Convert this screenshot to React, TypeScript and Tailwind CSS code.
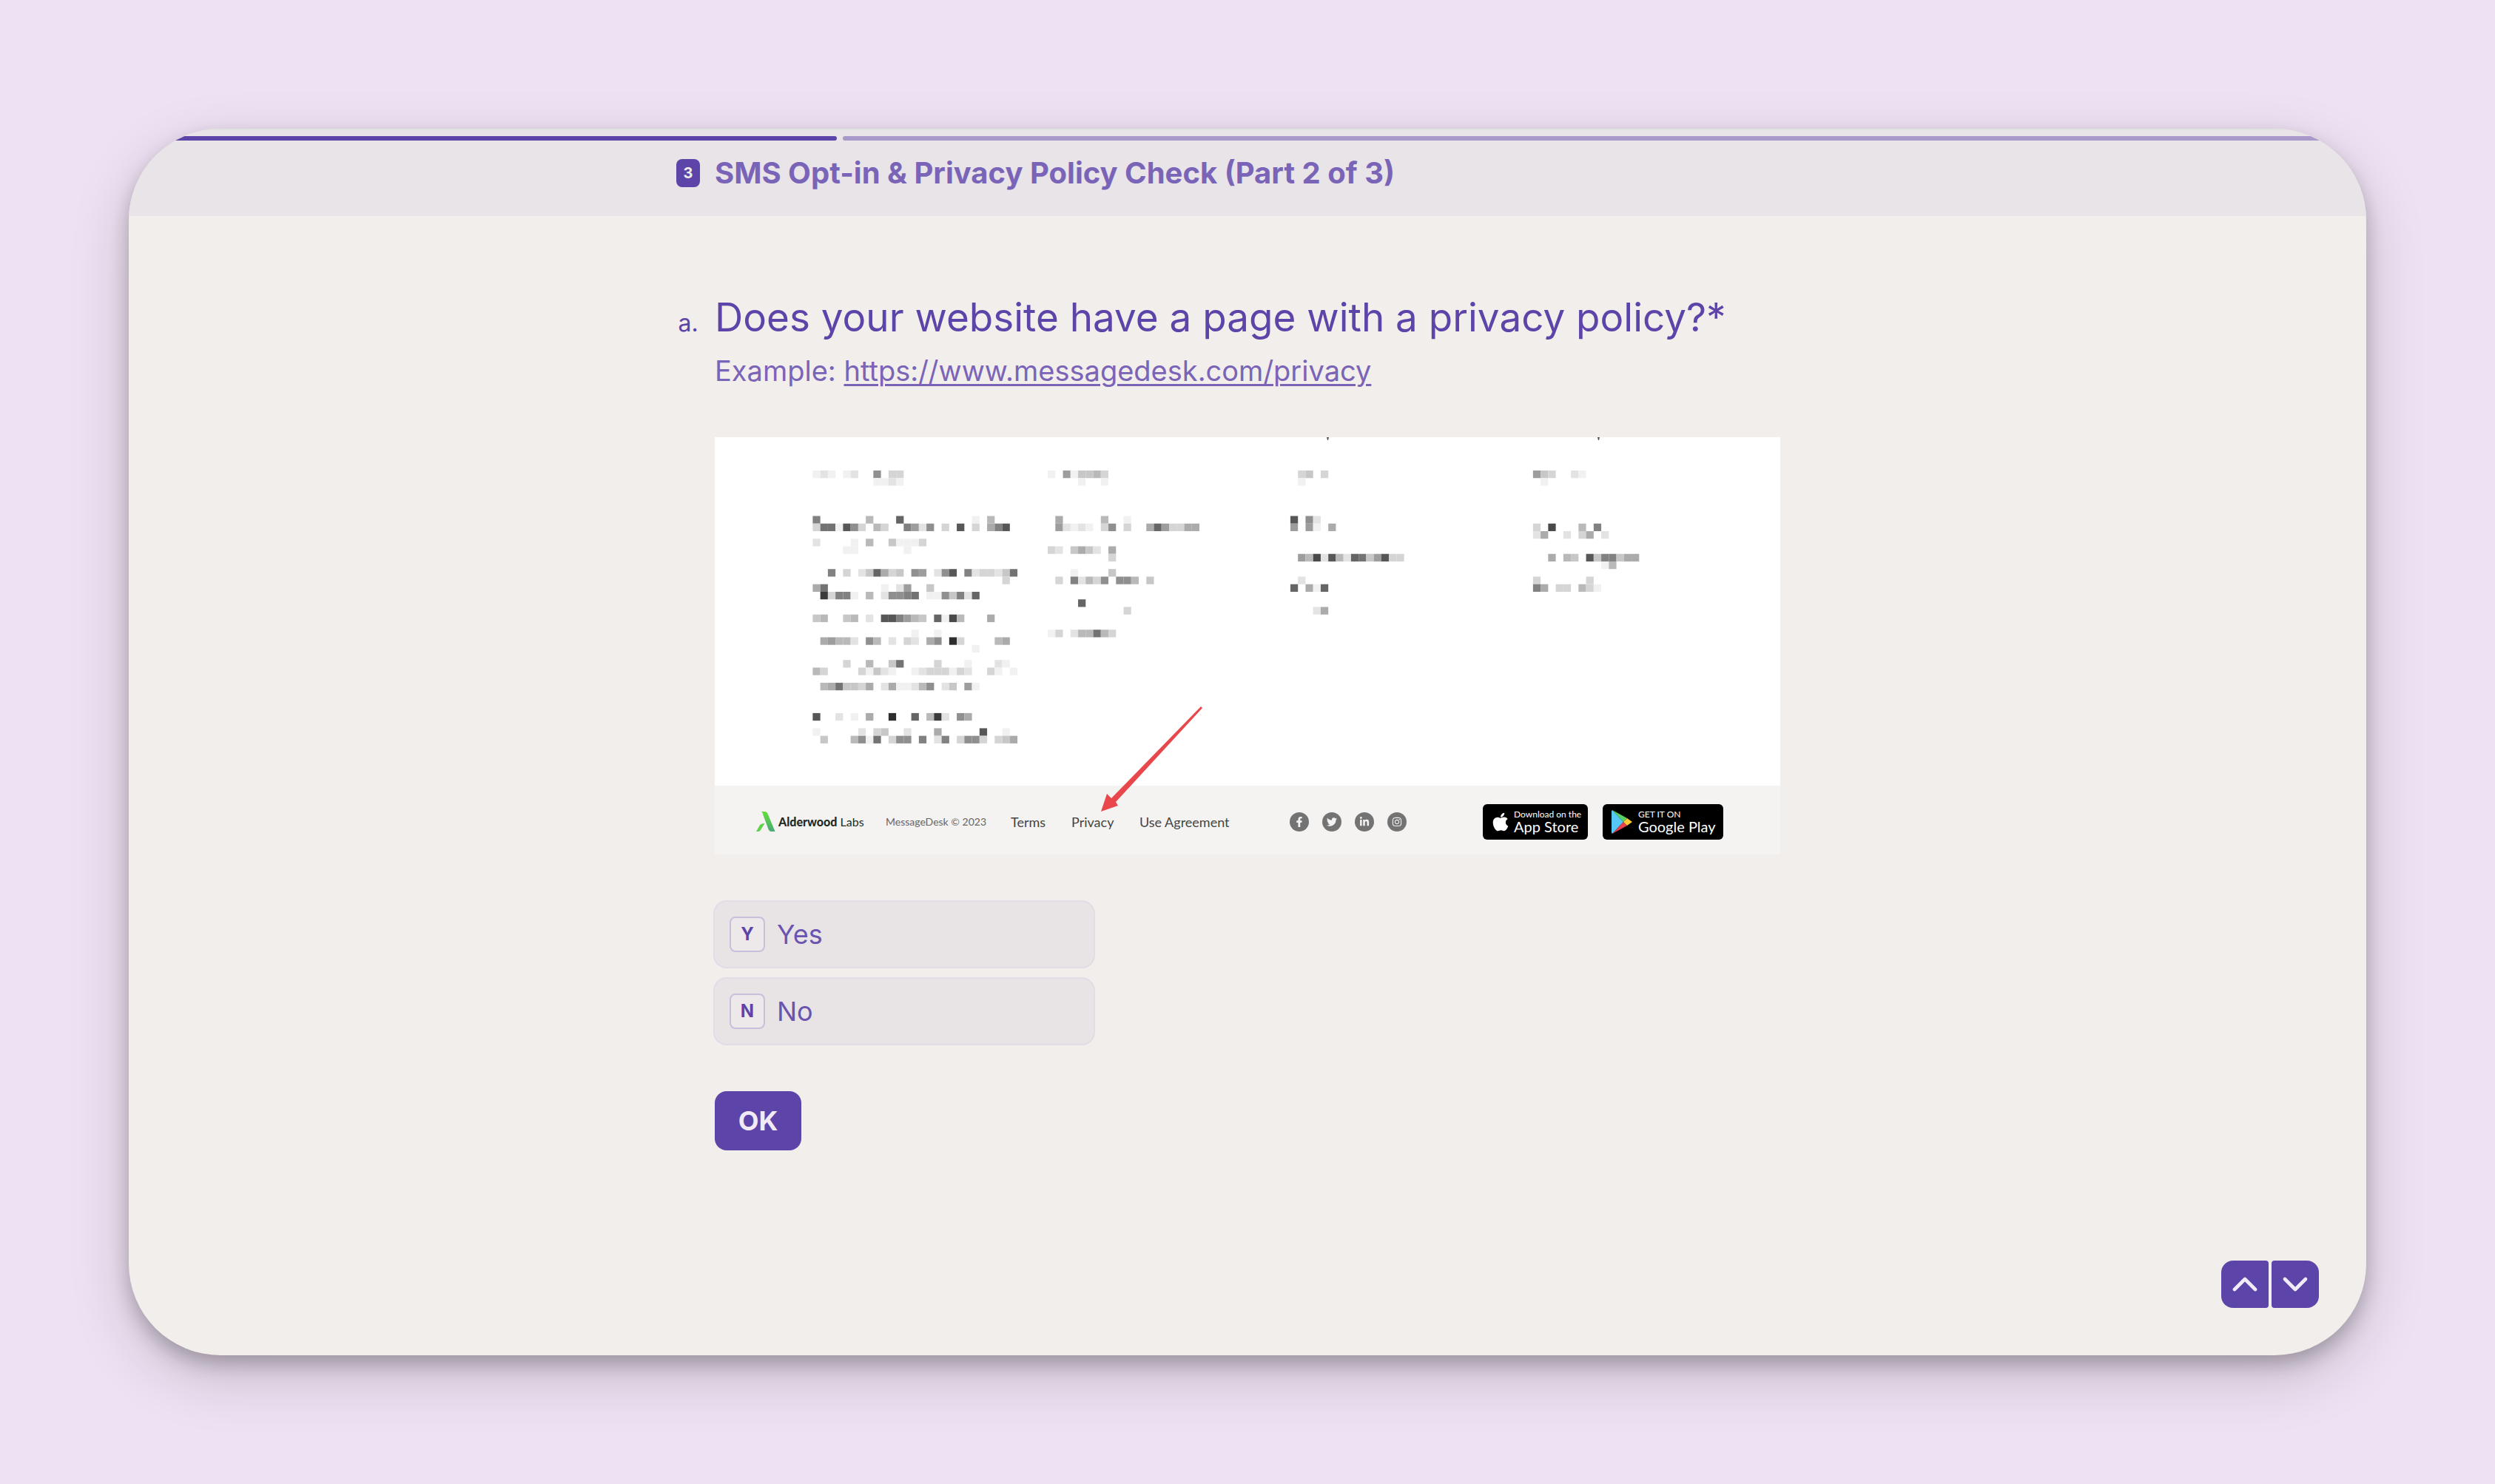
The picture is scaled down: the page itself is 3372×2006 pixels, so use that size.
import React, { useState } from "react";
import { ChevronDown, ChevronUp } from "lucide-react";
import {
  FaApple,
  FaFacebookF,
  FaInstagram,
  FaLinkedinIn,
  FaTwitter,
} from "react-icons/fa";

type Block = { col: number; rows: [number, string][] };

// pixelated footer columns, one hex digit per cell (higher is darker)
const CELL = 10.247;
const blocks: Block[] = [
  {
    col: 0,
    rows: [
      [0, "121.12..8.33"],
      [1, "........1121"],
      [6, "9......5...b.........1.5"],
      [7, "3aa1c83.53..9728.3.c.3.69c"],
      [9, "2....1.5..41113"],
      [10, "....11......1"],
      [13, "..9.3.24b634.87.28c.923324a"],
      [14, ".........................3"],
      [15, "6a.......1.27..4"],
      [16, ".e3991.5.2889a.118492b"],
      [19, "45..45.2.cc9754.b1d5...6"],
      [21, ".............1..1"],
      [22, ".67552.85.2.32.68.f3....56"],
      [23, ".....................1"],
      [25, "....3..5..4a....3...1...21"],
      [26, "53....31421..12333132..31.1"],
      [28, ".56a4436.2611258.24.71"],
      [32, "c..2.1.6..f..b.5e2.86"],
      [34, "1.....2.34..2...6.....c..1"],
      [35, ".4...581a.388.9.29.3883.346"],
    ],
  },
  {
    col: 31,
    rows: [
      [0, "1.714453"],
      [1, "....1..1"],
      [6, ".6.....5..1"],
      [7, ".72121.38.3..6b73366"],
      [10, "32.4642.6"],
      [11, "........3"],
      [13, "...1....4"],
      [14, ".3.92538.885.4"],
      [17, "....b"],
      [18, "..........3"],
      [21, "13.255a53"],
    ],
  },
  {
    col: 63,
    rows: [
      [0, ".34.3"],
      [1, ".1"],
      [6, "c.82"],
      [7, "7.71.6"],
      [11, ".75d2c52ba47c33"],
      [14, ".2"],
      [15, "b.61b"],
      [18, "...26"],
    ],
  },
  {
    col: 95,
    rows: [
      [0, "743..21"],
      [1, ".1"],
      [7, "3.d...5.9"],
      [8, "26..2.36.2"],
      [11, "..6.54.c499466"],
      [12, ".........15"],
      [14, "3......3"],
      [15, "96.33.531"],
    ],
  },
];

const socials = [
  { name: "Facebook", icon: FaFacebookF },
  { name: "Twitter", icon: FaTwitter },
  { name: "LinkedIn", icon: FaLinkedinIn },
  { name: "Instagram", icon: FaInstagram },
];

const choices = [
  { key: "Y", label: "Yes" },
  { key: "N", label: "No" },
];

function Overlay() {
  return (
    <svg
      viewBox="0 0 1440 564"
      className="absolute inset-0 w-full h-full pointer-events-none"
      aria-hidden="true"
    >
      {blocks.map((block) =>
        block.rows.map(([row, cells]) =>
          cells.split("").map((cell, i) => {
            if (cell === ".") return null;
            const shade = 255 - parseInt(cell, 16) * 14;
            return (
              <rect
                key={`${block.col}-${row}-${i}`}
                x={132.4 + (block.col + i) * CELL}
                y={45 + row * CELL}
                width={CELL}
                height={CELL}
                fill={`rgb(${shade},${shade},${shade})`}
              />
            );
          })
        )
      )}
      <path d="M827 0h3l-1 4h-1zM1193 0h3l-1 4h-1z" fill="#555" />
      <path
        d="M522 506L530 482L536 488L657 364L659 366L542 493L545 498Z"
        fill="#e8474b"
      />
    </svg>
  );
}

function SitePreview() {
  return (
    <div className="relative mt-[66px] bg-white font-['Lato',sans-serif]">
      <div className="h-[471px]" />
      <div className="h-[93px] bg-[#f4f3f1] pt-1 pl-14 grid grid-cols-[175px_169px_82px_92px_203px_227px_auto] items-center text-lg leading-6 text-[#444444]">
        <div className="flex items-center gap-1">
          <svg viewBox="0 0 26 27" className="w-[26px] h-[27px]">
            <defs>
              <linearGradient id="leaf" x1="0" y1="0" x2="0" y2="1">
                <stop offset="0" stopColor="#63e03a" />
                <stop offset="1" stopColor="#4aa877" />
              </linearGradient>
            </defs>
            <path
              d="M7 0h4c3 0 4 1 5 4l9.500 23h-5c-2 0-3-1-4-3L9.500 5C9 3 8.500 1 7 0z"
              fill="url(#leaf)"
            />
            <path
              d="M11.500 16L6.500 24c-1 2-2 3-4 3H0l4-7c1.500-3 3.500-4 7.500-4z"
              fill="#5fd14a"
            />
          </svg>
          <span className="text-base leading-6 text-[#1f2a24] whitespace-nowrap">
            <b className="font-black">Alderwood</b> Labs
          </span>
        </div>
        <span className="text-sm text-[#666666]">MessageDesk © 2023</span>
        <a href="#terms">Terms</a>
        <a href="#privacy">Privacy</a>
        <a href="#agreement">Use Agreement</a>
        <div className="flex gap-[18px]">
          {socials.map(({ name, icon: SocialIcon }) => (
            <a
              key={name}
              href="#social"
              aria-label={name}
              className="size-[26px] rounded-full bg-[#737373] text-[#f4f3f1] flex items-center justify-center"
            >
              <SocialIcon size={14} />
            </a>
          ))}
        </div>
        <div className="flex justify-end gap-5 pr-[77px] text-white">
          <a
            href="#appstore"
            className="w-[142px] h-12 rounded-md bg-black flex items-center gap-1 pl-[10px]"
          >
            <FaApple size={28} />
            <span className="flex flex-col whitespace-nowrap">
              <span className="text-xs leading-3">Download on the</span>
              <span className="text-xl leading-5">App Store</span>
            </span>
          </a>
          <a
            href="#googleplay"
            className="w-[163px] h-12 rounded-md bg-black flex items-center gap-2 pl-3"
          >
            <svg viewBox="0 0 28 32" className="w-7 h-8">
              <path d="M1 0L16 16L1 32Q0 31 0 30V2Q0 1 1 0z" fill="#55c8f5" />
              <path d="M1 0L21 11L16 16z" fill="#56d364" />
              <path d="M1 32L21 21L16 16z" fill="#e8404f" />
              <path d="M21 11L28 16L21 21L16 16z" fill="#f9c834" />
            </svg>
            <span className="flex flex-col whitespace-nowrap">
              <span className="text-xs leading-3">GET IT ON</span>
              <span className="text-xl leading-5">Google Play</span>
            </span>
          </a>
        </div>
      </div>
      <Overlay />
    </div>
  );
}

function App() {
  const [answer, setAnswer] = useState("");

  return (
    <div className="min-h-screen bg-[#eee1f3] p-[174px] flex font-['Inter',sans-serif] text-[#5d44a9]">
      <div className="relative flex-1 rounded-[124px] overflow-hidden bg-[#f2eeeb] shadow-[0_12px_24px_rgba(0,0,0,0.22),0_28px_80px_rgba(0,0,0,0.18)]">
        <header className="bg-[#e8e4e7] border-t-2 border-[#e2e1e2] pt-2 pb-[14px]">
          <div
            role="progressbar"
            aria-label="Progress"
            aria-valuenow={32}
            className="grid grid-cols-[957fr_2059fr] gap-2 h-[6px]"
          >
            <div className="bg-[#5d44a9] rounded-r-sm" />
            <div className="bg-[#a998ca] rounded-l-sm" />
          </div>
          <div className="max-w-[1440px] mx-auto h-[88px]">
            <div className="-ml-[52px] h-full flex items-center gap-5">
              <span className="w-8 h-[38px] rounded-lg bg-[#5d44a9] text-[#f1eeea] text-xl font-bold flex items-center justify-center">
                3
              </span>
              <h2 className="text-[40px] leading-[48px] font-bold text-[#7a64b8] whitespace-nowrap">
                SMS Opt-in & Privacy Policy Check (Part 2 of 3)
              </h2>
            </div>
          </div>
        </header>

        <main className="max-w-[1440px] mx-auto pt-[105px] pb-16">
          <div className="-ml-[52px] flex items-baseline gap-5">
            <span className="w-8 text-center text-[32px] leading-[48px]">
              a.
            </span>
            <h1
              id="question"
              className="text-[53px] leading-[64px] whitespace-nowrap"
            >
              Does your website have a page with a privacy policy?*
            </h1>
          </div>
          <p className="mt-4 text-[38px] leading-[48px] text-[#7a64b8]">
            Example:{" "}
            <a
              href="https://www.messagedesk.com/privacy"
              className="underline decoration-[3px] underline-offset-4"
            >
              https://www.messagedesk.com/privacy
            </a>
          </p>

          <SitePreview />

          <div
            role="radiogroup"
            aria-labelledby="question"
            className="mt-[62px] -ml-[2px] w-[516px] flex flex-col gap-3"
          >
            {choices.map((choice) => (
              <label
                key={choice.key}
                className="h-[92px] px-5 flex items-center gap-4 rounded-[18px] border-2 border-[#e1dce5] bg-[#e8e4e6] cursor-pointer"
              >
                <input
                  type="radio"
                  name="answer"
                  value={choice.key}
                  checked={answer === choice.key}
                  onChange={() => setAnswer(choice.key)}
                  className="sr-only"
                />
                <span className="size-12 rounded-lg border-2 border-[#c7bfdb] bg-[#ede9ea] text-2xl font-bold flex items-center justify-center">
                  {choice.key}
                </span>
                <span className="text-[36px] leading-[48px] text-[#6b53b0]">
                  {choice.label}
                </span>
              </label>
            ))}
          </div>

          <button
            type="button"
            className="mt-[62px] w-[117px] h-20 rounded-2xl bg-[#5d44a9] text-[#f0ebf6] text-[36px] font-bold"
          >
            OK
          </button>
        </main>

        <div className="absolute right-16 bottom-16 flex gap-1 text-[#f0ebf6]">
          <button
            type="button"
            aria-label="Previous question"
            className="size-16 rounded-l-2xl rounded-r-sm bg-[#5d44a9] flex items-center justify-center"
          >
            <ChevronUp size={56} strokeWidth={2} />
          </button>
          <button
            type="button"
            aria-label="Next question"
            className="size-16 rounded-r-2xl rounded-l-sm bg-[#5d44a9] flex items-center justify-center"
          >
            <ChevronDown size={56} strokeWidth={2} />
          </button>
        </div>
      </div>
    </div>
  );
}

export default App;
